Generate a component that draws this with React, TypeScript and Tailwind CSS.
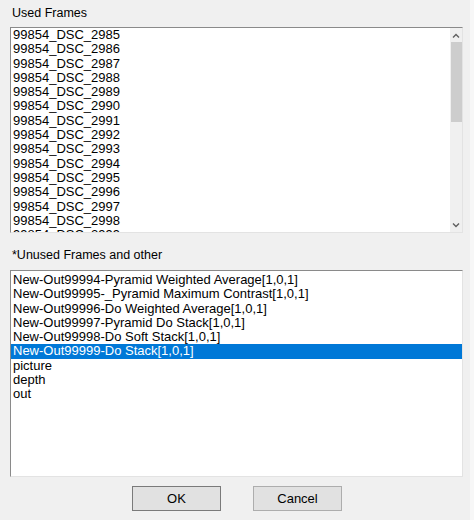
import React from "react";

const usedFrames = Array.from({ length: 15 }, (_, i) => `99854_DSC_${2985 + i}`);

const otherItems = [
	"New-Out99994-Pyramid Weighted Average[1,0,1]",
	"New-Out99995-_Pyramid Maximum Contrast[1,0,1]",
	"New-Out99996-Do Weighted Average[1,0,1]",
	"New-Out99997-Pyramid Do Stack[1,0,1]",
	"New-Out99998-Do Soft Stack[1,0,1]",
	"New-Out99999-Do Stack[1,0,1]",
	"picture",
	"depth",
	"out",
];

const selected = 5;

function Chevron({ up }: { up?: boolean }) {
	return (
		<svg width="8" height="5" viewBox="0 0 8 5" className="block">
			<path
				d={up ? "M1 4.5 L4 1.5 L7 4.5" : "M1 0.5 L4 3.5 L7 0.5"}
				fill="none"
				stroke="#606060"
				strokeWidth="1.4"
			/>
		</svg>
	);
}

export default function App() {
	return (
		<div
			className="w-[474px] h-[520px] bg-[#f0f0f0] flex flex-col px-[10px] text-black border-r-[4px] border-r-[#f7f7f7]"
			style={{ fontFamily: '"Liberation Sans", Arial, sans-serif' }}
		>
			<div className="h-[27px] flex items-center pl-[2px] text-[12.5px]">Used Frames</div>

			<div className="w-[453px] h-[206px] flex border-t border-l border-t-[#8a8a8a] border-l-[#8a8a8a] border-r border-b border-r-[#e3e3e3] border-b-[#e3e3e3] bg-white">
				<div className="flex-1 overflow-hidden pl-[2px] text-[13px] leading-[14.3px]">
					{usedFrames.map((f) => (
						<div key={f} className="whitespace-nowrap">
							{f}
						</div>
					))}
				</div>
				<div className="w-[12px] bg-[#f0f0f0] flex flex-col items-center">
					<div className="h-[14px] flex items-center justify-center">
						<Chevron up />
					</div>
					<div className="w-[11px] h-[80px] bg-[#cdcdcd]" />
					<div className="flex-1" />
					<div className="h-[14px] flex items-center justify-center">
						<Chevron />
					</div>
				</div>
			</div>

			<div className="h-[37px] flex items-center pl-[2px] pt-[8px] text-[12.5px]">*Unused Frames and other</div>

			<div className="w-[453px] h-[207px] border-t border-l border-t-[#8a8a8a] border-l-[#8a8a8a] border-r border-b border-r-[#e3e3e3] border-b-[#e3e3e3] bg-white pt-[2px] text-[13px] leading-[14.3px] overflow-hidden">
				{otherItems.map((item, i) => (
					<div
						key={item}
						className={
							i === selected
								? "bg-[#0078d7] text-white pl-[2px] whitespace-nowrap"
								: "pl-[2px] whitespace-nowrap"
						}
					>
						{item}
					</div>
				))}
			</div>

			<div className="flex-1 flex justify-center gap-[32px] pt-[9px] pl-[4px]">
				<button className="w-[89px] h-[25px] bg-[#e1e1e1] border border-[#7a7a7a] text-[13px]">
					OK
				</button>
				<button className="w-[89px] h-[25px] bg-[#e1e1e1] border border-[#adadad] text-[13px]">
					Cancel
				</button>
			</div>
		</div>
	);
}
